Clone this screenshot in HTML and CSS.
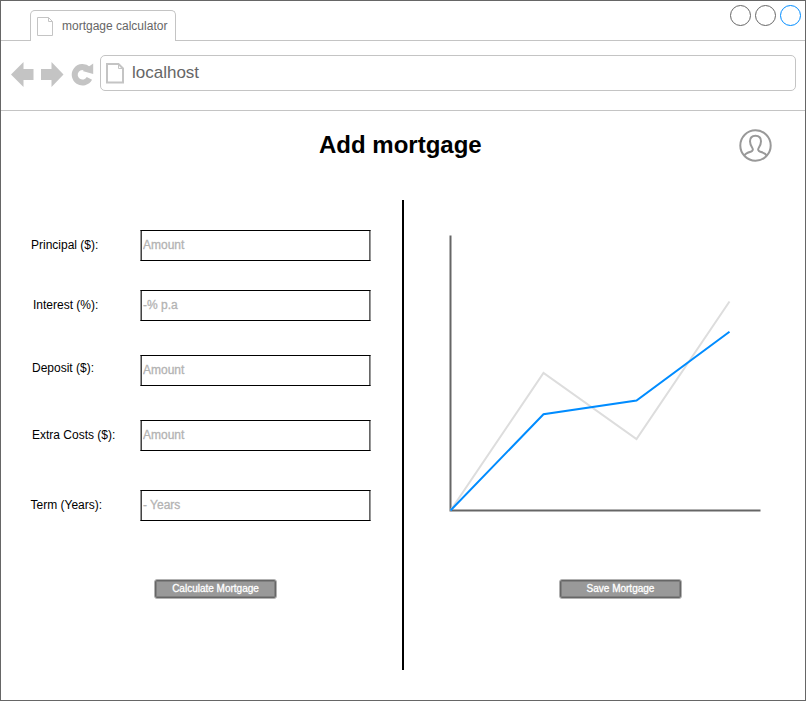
FILE: index.html
```html
<!DOCTYPE html>
<html lang="en">
<head>
<meta charset="utf-8">
<title>mortgage calculator</title>
<link rel="stylesheet" href="styles.css">
</head>
<body>
<div class="window">
  <header class="tabstrip">
    <div class="tab">
      <svg class="tab-icon" width="17" height="20" viewBox="0 0 17 20"><path d="M.5.5H11.500L15.500 4.500V18.500H.5Z M11.500 .5V4.500H15.500" fill="none" stroke="#c4c4c4"/></svg>
      <span>mortgage calculator</span>
    </div>
    <svg class="controls" width="73" height="22" viewBox="0 0 73 22" fill="none" stroke="#666"><circle cx="11.500" cy="10.500" r="10"/><circle cx="36.500" cy="10.500" r="10"/><circle cx="61.500" cy="10.500" r="10" stroke="#008cff"/></svg>
  </header>
  <nav class="toolbar">
    <svg class="nav-icons" width="84" height="26" viewBox="0 0 84 26">
      <path fill="#c4c4c4" d="M0 12.500 12.500 0V7H22.500V18H12.500V25Z M52.500 12.500 40.500 0V7H30V18H40.500V25Z"/>
      <path d="M78.400 16.400A7.800 7.800 0 1 1 77 7.200" fill="none" stroke="#c4c4c4" stroke-width="6"/>
      <path fill="#c4c4c4" d="M82.200 1.500V12L71.500 9Z"/>
    </svg>
    <div class="address">
      <svg class="page-icon" width="18" height="21" viewBox="0 0 18 21"><path d="M1 1H12.500L17 5.500V19.500H1Z" fill="none" stroke="#c4c4c4" stroke-width="2"/><path d="M12.500 1V5.500H17" fill="none" stroke="#c4c4c4"/></svg>
      <span>localhost</span>
    </div>
  </nav>
  <main class="page">
    <div class="heading">
      <h1>Add mortgage</h1>
      <svg class="user" width="34" height="34" viewBox="-.5 .5 34 34" fill="none" stroke="#999" stroke-width="2"><circle cx="17" cy="17" r="15.200"/><path d="M5.500 27.500C7 24.500 10 23.800 12.300 23.200C14.500 22.600 14.800 20.800 13.700 19.200C12.300 17.200 11.500 15.200 11.500 12.800C11.500 9.300 13.700 7.300 17 7.300S22.500 9.300 22.500 12.800C22.500 15.200 21.700 17.200 20.300 19.200C19.200 20.800 19.500 22.600 21.700 23.200C24 23.800 27 24.500 28.500 27.500"/></svg>
    </div>
    <div class="columns">
      <form class="form">
        <label class="row principal"><span>Principal ($):</span><input placeholder="Amount"></label>
        <label class="row interest"><span>Interest (%):</span><input placeholder="-% p.a"></label>
        <label class="row deposit"><span>Deposit ($):</span><input placeholder="Amount"></label>
        <label class="row costs"><span>Extra Costs ($):</span><input placeholder="Amount"></label>
        <label class="row term"><span>Term (Years):</span><input placeholder="- Years"></label>
        <button type="button" class="btn">Calculate Mortgage</button>
      </form>
      <section class="result">
        <svg class="chart" width="320" height="285" viewBox="445 230 320 285" fill="none" stroke-width="2">
          <path d="M450.500 235.500V510.500H760.500" stroke="#666"/>
          <path d="M450.500 510.500 543.500 373 636.500 439 729.500 301.500" stroke="#ddd"/>
          <path d="M450.500 510.500 543.500 414.200 636.500 400.500 729.500 331.700" stroke="#008cff"/>
        </svg>
        <button type="button" class="btn">Save Mortgage</button>
      </section>
    </div>
  </main>
</div>
</body>
</html>
```
FILE: styles.css
```css
* { box-sizing: border-box; }
body { margin: 0; background: #fff; font: 12px/14px "Liberation Sans", Arial, sans-serif; }
svg { display: block; flex: none; }
.window { width: 806px; height: 701px; border: 1px solid #666; overflow: hidden; }
.tabstrip { height: 40px; display: flex; justify-content: space-between; align-items: flex-end; border-bottom: 1px solid #c4c4c4; padding-left: 29px; }
.tab { width: 146px; height: 31px; margin-bottom: -1px; display: flex; align-items: flex-start; gap: 8px; padding: 6px 0 0 6px; border: 1px solid #c4c4c4; border-bottom: 0; border-radius: 5px 5px 0 0; background: #fff; color: #666; white-space: nowrap; }
.tab span { margin-top: 2px; }
.controls { align-self: flex-start; margin-top: 4px; margin-right: 3px; }
.toolbar { height: 70px; display: flex; border-bottom: 1px solid #c4c4c4; padding: 14px 9px 0 10px; }
.nav-icons { margin: 7px 0 0; }
.address { width: 696px; height: 36px; margin-left: 5px; flex: none; display: flex; gap: 8px; padding: 7px 0 0 5px; border: 1px solid #c4c4c4; border-radius: 5px; color: #666; font-size: 17px; line-height: 20px; }
.heading { height: 89px; display: flex; padding: 18px 33px 0 318px; justify-content: space-between; }
h1 { margin: 2px 0 0; font-size: 24px; line-height: 28px; }
.columns { display: flex; }
.form { width: 403px; height: 470px; padding: 30px 0 0 29px; border-right: 2px solid #000; }
.row { display: flex; height: 31px; }
.row span { width: 110px; flex: none; padding: 8px 0 0; }
.principal { margin-bottom: 29px; }
.interest, .deposit { margin-bottom: 34px; }
.costs { margin-bottom: 39px; }
.principal span { padding-left: 1px; }
.interest span { padding-left: 3px; }
.deposit span { padding: 6px 0 0 2px; }
.costs span { padding-left: 2px; }
.term span { padding-left: .5px; }
input { width: 231px; height: 31px; margin: 0; padding: 0 2px 2px; border: 1px solid; border-color: #000 #999 #000 #999; box-shadow: inset 1px 0 #444, inset -1px 0 #666; border-radius: 0; background: #fff; font: inherit; color: #000; outline: 0; }
input::placeholder { color: #b3b3b3; opacity: 1; -webkit-text-stroke: .3px #b3b3b3; }
.btn { display: block; width: 123px; height: 20px; padding: 0; border: 1px solid #b2b2b2; border-radius: 3px; box-shadow: inset 0 0 0 1px #666, inset 0 0 0 2px #808080; background: #999; color: #fff; font: 10px/14px "Liberation Sans", Arial, sans-serif; -webkit-text-stroke: .3px #fff; white-space: nowrap; }
.form .btn { margin: 58px 0 0 124px; }
.result { padding: 30px 0 0 41px; }
.result .btn { margin: 64px 0 0 114px; }
```
